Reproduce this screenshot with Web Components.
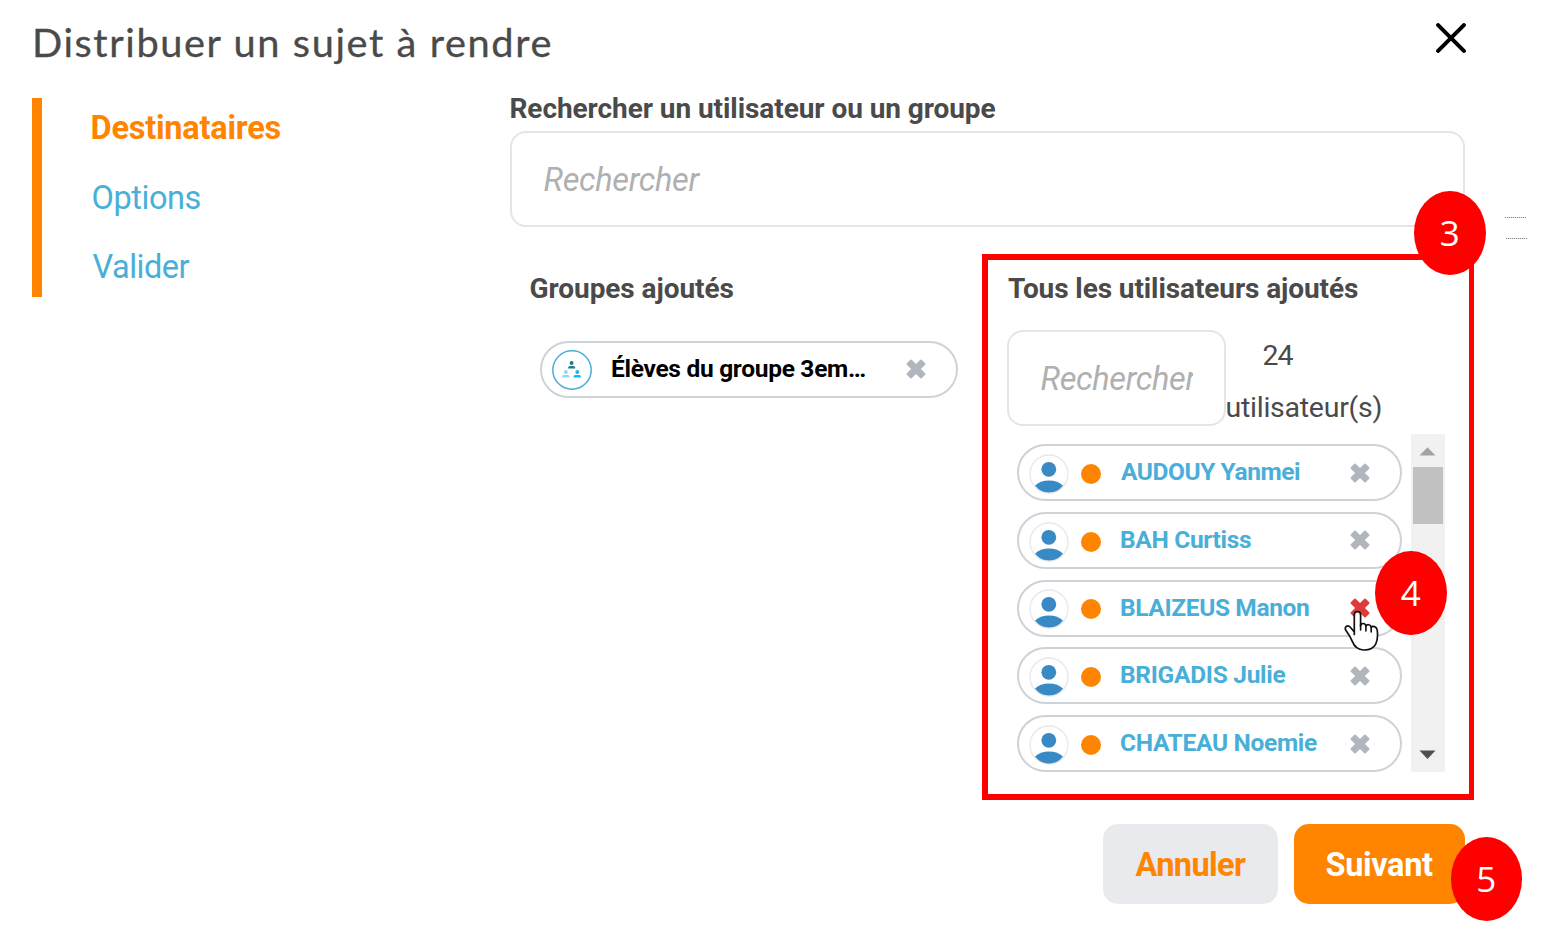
<!DOCTYPE html>
<html lang="fr">
<head>
<meta charset="utf-8">
<title>Distribuer un sujet à rendre</title>
<style>
html,body{margin:0;background:#fff;overflow:hidden}
body{font-family:Roboto,"Liberation Sans",sans-serif;color:#4a4a4a}
</style>
</head>
<body>
<distribute-dialog></distribute-dialog>
<script>
const define = (name, html, setup) => {
  const tpl = document.createElement('template');
  tpl.innerHTML = html;
  customElements.define(name, class extends HTMLElement {
    connectedCallback() {
      if (this.shadowRoot) return;
      this.attachShadow({ mode: 'open' }).append(tpl.content.cloneNode(true));
      if (setup) setup(this, this.shadowRoot);
    }
  });
};

/* A single line of text tracked, or stretched, so that its ink spans the given width. */
define('ui-text', `<style>
:host{display:block;white-space:nowrap;flex:none}
span{display:inline-block;white-space:pre;transform-origin:0 50%}
</style><span><slot></slot></span>`, (el, root) => {
  const target = parseFloat(el.getAttribute('ink'));
  if (!target) return;
  const cs = getComputedStyle(el), text = el.textContent;
  const ctx = document.createElement('canvas').getContext('2d');
  ctx.font = `${cs.fontStyle} ${cs.fontWeight} ${cs.fontSize} ${cs.fontFamily}`;
  const m = ctx.measureText(text);
  const ink = m.actualBoundingBoxRight + m.actualBoundingBoxLeft;
  const span = root.querySelector('span');
  if (el.hasAttribute('stretch')) {
    const gap = parseFloat(el.getAttribute('stretch'));
    span.style.letterSpacing = gap + 'px';
    span.style.transform = `scaleX(${target / (ink + gap * (text.length - 1))})`;
  } else {
    span.style.letterSpacing = (target - ink) / (text.length - 1) + 'px';
  }
  span.style.marginLeft = m.actualBoundingBoxLeft + 1 + 'px';
});

define('close-icon', `<style>:host{display:block;width:30px;height:30px}svg{display:block}</style>
<svg width="30" height="30" viewBox="0 0 30 30"><path d="M2.1 2.1 27.9 27.9M27.9 2.1 2.1 27.9" stroke="#000" stroke-width="4" stroke-linecap="round"/></svg>`);

define('remove-icon', `<style>:host{display:block;width:20px;height:20px;color:#b0b5be;flex:none}svg{display:block}</style>
<svg width="20" height="20" viewBox="0 0 20 20"><path d="M.8 4.300 4.300.8Q5 .2 5.700.8L10 5.100 14.300.8Q15 .2 15.700.8L19.200 4.300Q19.800 5 19.200 5.700L14.900 10 19.200 14.300Q19.800 15 19.200 15.700L15.700 19.200Q15 19.800 14.300 19.200L10 14.900 5.700 19.200Q5 19.800 4.300 19.200L.8 15.700Q.2 15 .8 14.300L5.100 10 .8 5.700Q.2 5 .8 4.300Z" fill="currentColor"/></svg>`);

define('user-avatar', `<style>:host{display:block;width:40px;height:40px;flex:none}svg{display:block}</style>
<svg width="40" height="40" viewBox="0 0 40 40"><circle cx="20" cy="20" r="19" fill="#fff" stroke="#e8e8ec" stroke-width="1.3"/><circle cx="19.8" cy="15.3" r="7.4" fill="#3989c4"/><path d="M6 31.6C9.3 28.2 14 26.4 20 26.4S30.700 28.2 34 31.600C30.600 36.100 25.700 38.500 20 38.500S9.400 36.100 6 31.600Z" fill="#3989c4"/></svg>`);

define('group-avatar', `<style>:host{display:block;width:40px;height:40px;flex:none}svg{display:block}</style>
<svg width="40" height="40" viewBox="0 0 40 40"><circle cx="20" cy="20" r="19.200" fill="#fff" stroke="#49afd8" stroke-width="1.500"/>
<g fill="#1c7c91"><circle cx="19.600" cy="13.100" r="2"/><path d="M16.100 18.600V17.400Q16.300 15.900 18 15.900H21.300Q23 15.900 23.200 17.400V18.600Z"/></g>
<g fill="#8ed8f6"><circle cx="13.800" cy="22" r="2"/><path d="M10.200 27.600V26.300Q10.500 24.900 12 24.900H15.600Q17.100 24.900 17.400 26.300V27.600Z"/></g>
<g fill="#14b9ef"><circle cx="25.300" cy="22" r="2"/><path d="M21.700 27.600V26.300Q22 24.900 23.500 24.900H27.100Q28.600 24.900 28.900 26.300V27.600Z"/></g></svg>`);

define('step-nav', `<style>
:host{display:block;box-sizing:border-box;width:478px;height:199px;border-left:10px solid #ff8500;flex:none}
nav{display:flex;flex-direction:column;margin-left:49.500px;font-size:32.500px;line-height:69.700px;color:#49afd8;position:relative;top:-3.700px}
ui-text:first-child{color:#ff8500;font-weight:700}
</style><nav><ui-text ink="188">Destinataires</ui-text><ui-text ink="108">Options</ui-text><ui-text ink="97">Valider</ui-text></nav>`);

define('search-field', `<style>
:host{display:block;box-sizing:border-box;height:95.500px;border:2px solid #e5e5e5;border-radius:16px;padding:0 31px 0 30.500px;background:#fff}
div{overflow:hidden;font:italic 400 32.500px/94px Roboto,sans-serif;color:#b0b0b0;height:91px}
</style><div><ui-text ink="157">Rechercher</ui-text></div>`);

define('group-chip', `<style>
:host{display:flex;box-sizing:border-box;width:418px;height:57px;border:2px solid #ced2d9;border-radius:29px;align-items:center;padding:0 30.500px 0 9.500px;background:#fff}
group-avatar{margin-top:1px}
ui-text{font-size:24.500px;font-weight:700;line-height:52px;color:#000;margin-left:19.500px;flex:1;min-width:0}
</style><group-avatar></group-avatar><ui-text ink="253">Élèves du groupe 3em…</ui-text><remove-icon></remove-icon>`);

define('user-chip', `<style>
:host{display:flex;box-sizing:border-box;width:384.500px;height:57.200px;border:2px solid #ced2d9;border-radius:29px;align-items:center;padding:0 30px 0 10px;background:#fff}
user-avatar{margin-top:2.500px}
i{width:20px;height:20px;border-radius:50%;background:#ff8500;margin:2.500px 0 0 12px}
ui-text{font-size:24.500px;font-weight:700;line-height:52.700px;color:#49afd8;margin-left:19px;flex:1}
:host([hovered]) remove-icon{color:#e13a3a}
</style><user-avatar></user-avatar><i></i><ui-text></ui-text><remove-icon></remove-icon>`, (el, root) => {
  const old = root.querySelector('ui-text');
  const line = document.createElement('ui-text');
  line.setAttribute('ink', el.getAttribute('ink'));
  line.textContent = el.getAttribute('name');
  old.replaceWith(line);
});

define('scroll-bar', `<style>
:host{display:flex;flex-direction:column;align-items:center;width:33.500px;height:338.500px;background:#f1f1f1;flex:none}
svg{display:block;flex:none}
b{display:block;width:30px;height:57px;background:#c1c1c1}
s{flex:1}
</style><svg width="33" height="33.300"><path d="M8.500 21.500 16.500 13.200 24.500 21.500Z" fill="#a3a3a3"/></svg><b></b><s></s>
<svg width="33" height="33"><path d="M8.500 11.500H24.500L16.500 20Z" fill="#505050"/></svg>`);

define('action-button', `<style>
:host{display:block;box-sizing:border-box;height:80px;border-radius:15px;padding-left:31.500px;font-size:32.500px;font-weight:700;line-height:82.500px;background:#e9eaee;color:#ff8500}
:host([primary]){background:#ff8500;color:#fff}
</style><slot></slot>`);

define('step-badge', `<style>
:host{position:absolute;display:flex;align-items:center;justify-content:center;width:71.500px;height:84px;border-radius:50%;background:#f00;color:#fff;font:500 35px/84px "Open Sans","Noto Sans",sans-serif;z-index:3}
</style><slot></slot>`);

define('hand-cursor', `<style>:host{position:absolute;display:block;z-index:4}svg{display:block}</style>
<svg width="36" height="42" viewBox="0 0 36 42"><path d="M10.300 24.500V5C10.300.6 16.600.6 16.600 5V16C17 12.500 21.400 12.800 21.900 16.200C22.900 13.800 26.700 14.300 27.200 17.300C28.500 15.500 32.700 16.500 33.200 20C33.900 24.600 33.700 29.600 31.700 34.200C29.500 38.400 25.200 40.200 19.500 40C13.200 39.600 10.200 36.300 8.300 31.400C6.700 27.500 4.400 23.900 1.800 20.300C.2 17.300 3.100 14.200 6.300 17.200L10.300 22" fill="#fff" stroke="#111" stroke-width="1.700" stroke-linejoin="round" stroke-linecap="round"/><path d="M16.600 15V20M21.900 16.200V21M27.200 17.300V22" fill="none" stroke="#111" stroke-width="1.600" stroke-linecap="round"/></svg>`);

define('added-groups', `<style>
:host{display:block;width:472px;box-sizing:border-box;padding:17px 0 0 19.500px;flex:none}
h3{margin:0;font-size:28px;line-height:36px}
group-chip{margin:33.500px 0 0 10.500px}
</style><h3><ui-text ink="203">Groupes ajoutés</ui-text></h3><group-chip></group-chip>`);

define('added-users', `<style>
:host{display:block;box-sizing:border-box;width:492px;height:546px;border:6px solid #f00;border-right-width:5px;padding:11px 0 0 19px;flex:none}
h3{margin:0;font-size:28px;line-height:36px}
.find{display:flex;margin-top:23px;height:103.500px}
search-field{width:218.500px;flex:none}
.count{width:156px;font-size:28.500px;line-height:52px}
.count ui-text:first-child{padding-left:37px}
.scroll{display:flex}
.list{display:flex;flex-direction:column;gap:10.500px;padding:10.700px 0 0 10px;width:394px}
</style>
<h3><ui-text ink="350">Tous les utilisateurs ajoutés</ui-text></h3>
<div class="find"><search-field></search-field><div class="count"><ui-text ink="30">24</ui-text><ui-text ink="154">utilisateur(s)</ui-text></div></div>
<div class="scroll"><div class="list">
<user-chip name="AUDOUY Yanmei" ink="179"></user-chip>
<user-chip name="BAH Curtiss" ink="130"></user-chip>
<user-chip name="BLAIZEUS Manon" ink="188" hovered></user-chip>
<user-chip name="BRIGADIS Julie" ink="164.500"></user-chip>
<user-chip name="CHATEAU Noemie" ink="196"></user-chip>
</div><scroll-bar></scroll-bar></div>`);

define('dotted-mark', `<style>:host{position:absolute;display:block;width:21px;height:1px;background:repeating-linear-gradient(90deg,#888 0 1px,#ddd 1px 2px)}</style>`);

define('distribute-dialog', `<style>
:host{display:block;position:relative;width:1552px;height:949px;overflow:hidden;background:#fff}
header{display:flex;justify-content:space-between;box-sizing:border-box;height:97.500px;padding:0 86px 0 34px}
h1{margin:0;font:400 38px/85px Lato,sans-serif;-webkit-text-stroke:.3px #4a4a4a}
close-icon{margin-top:22.500px}
main{display:flex;padding-left:32px}
section{width:955px;flex:none}
h2{margin:0;font-size:28px;line-height:33.500px;height:33.500px;position:relative;left:-.5px;top:-6px}
.cols{display:flex;margin-top:27.500px}
footer{display:flex;gap:16px;margin:24px 0 0 593px}
action-button:first-child{width:175px}
action-button:last-child{width:171px}
</style>
<header><h1><ui-text ink="516" stretch="1.500">Distribuer un sujet à rendre</ui-text></h1><close-icon></close-icon></header>
<main><step-nav></step-nav><section>
<h2><ui-text ink="485">Rechercher un utilisateur ou un groupe</ui-text></h2>
<search-field></search-field>
<div class="cols"><added-groups></added-groups><added-users></added-users></div>
<footer><action-button><ui-text ink="110.500">Annuler</ui-text></action-button><action-button primary><ui-text ink="106.500">Suivant</ui-text></action-button></footer>
</section></main>
<step-badge style="left:1414px;top:190.500px">3</step-badge>
<step-badge style="left:1375px;top:550.500px">4</step-badge>
<step-badge style="left:1450.500px;top:836.500px">5</step-badge>
<hand-cursor style="left:1344px;top:610px"></hand-cursor>
<dotted-mark style="left:1505px;top:217px"></dotted-mark>
<dotted-mark style="left:1506px;top:238px"></dotted-mark>`);
</script>
</body>
</html>
